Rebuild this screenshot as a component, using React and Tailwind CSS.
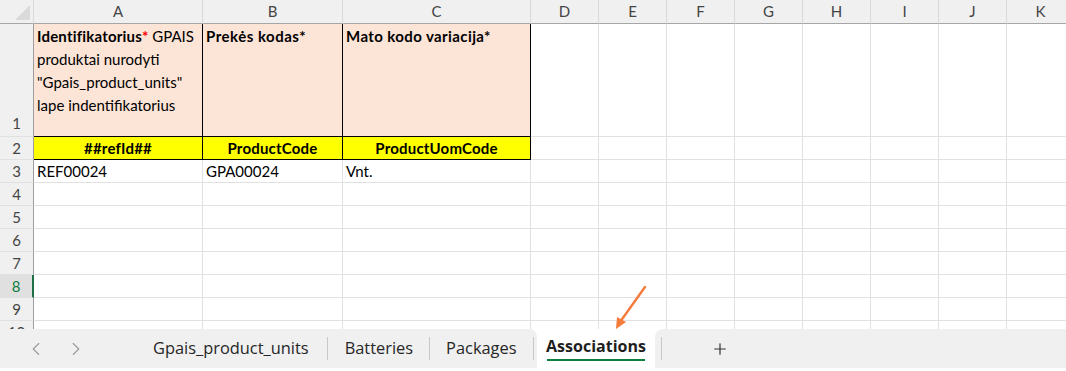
import { ChevronLeft, ChevronRight, Plus } from "lucide-react";

const cols = [
  { key: "A", w: "w-[169px]" },
  { key: "B", w: "w-[140px]" },
  { key: "C", w: "w-[188px]" },
  { key: "D", w: "w-[68px]" },
  { key: "E", w: "w-[68px]" },
  { key: "F", w: "w-[68px]" },
  { key: "G", w: "w-[68px]" },
  { key: "H", w: "w-[68px]" },
  { key: "I", w: "w-[68px]" },
  { key: "J", w: "w-[68px]" },
  { key: "K", w: "w-[68px]" },
];

const emptyCols = cols.slice(3);

function RowHead({ n, selected, tall }) {
  return (
    <div
      className={`w-[34px] shrink-0 flex justify-center border-r border-b border-b-[#e1e1e1] ${
        tall ? "items-end pb-[1px]" : "items-center"
      } ${
        selected
          ? "bg-[#e0e0e0] text-[#107c41] border-r-2 border-r-[#1e7145]"
          : "bg-[#f0f0f0] text-[#444] border-r-[#9e9e9e]"
      }`}
    >
      {n}
    </div>
  );
}

function Blank({ w }) {
  return <div className={`${w} shrink-0 border-r border-b border-[#e1e1e1]`} />;
}

export default function App() {
  const plainRows = [4, 5, 6, 7, 8, 9, 10];

  return (
    <div className="w-[1066px] h-[371px] bg-white overflow-hidden relative font-['Lato',sans-serif] text-[15px] text-black">
      <div className="h-[329px] overflow-hidden">
        {/* column letters */}
        <div className="flex h-[24px]">
          <div className="w-[34px] shrink-0 bg-[#f0f0f0] border-r border-r-[#d9d9d9] border-b border-b-[#a6a6a6] relative">
            <svg className="absolute right-[3px] bottom-[3px]" width="15" height="15">
              <polygon points="15,0 15,15 0,15" fill="#dadada" />
            </svg>
          </div>
          {cols.map((c) => (
            <div
              key={c.key}
              className={`${c.w} shrink-0 bg-[#f0f0f0] border-r border-r-[#d9d9d9] border-b border-b-[#a6a6a6] flex items-center justify-center text-[#444]`}
            >
              {c.key}
            </div>
          ))}
        </div>

        {/* row 1 */}
        <div className="flex h-[113px] leading-[23px]">
          <RowHead n={1} tall />
          <div className="w-[169px] shrink-0 bg-[#fce4d6] border-r border-b border-black pl-[3px] pt-[1px]">
            <span className="font-bold tracking-[0.2px]">Identifikatorius</span>
            <span className="font-bold text-[#ff0000]">*</span> GPAIS produktai nurodyti
            "Gpais_product_units" lape indentifikatorius
          </div>
          <div className="w-[140px] shrink-0 bg-[#fce4d6] border-r border-b border-black pl-[3px] pt-[1px] font-bold tracking-[0.5px]">
            Prekės kodas*
          </div>
          <div className="w-[188px] shrink-0 bg-[#fce4d6] border-r border-b border-black pl-[3px] pt-[1px] font-bold tracking-[0.4px]">
            Mato kodo variacija*
          </div>
          {emptyCols.map((c) => (
            <Blank key={c.key} w={c.w} />
          ))}
        </div>

        {/* row 2 */}
        <div className="flex h-[23px]">
          <RowHead n={2} />
          {["##refId##", "ProductCode", "ProductUomCode"].map((t, i) => (
            <div
              key={t}
              className={`${cols[i].w} shrink-0 bg-[#ffff00] border-r border-b border-black flex items-center justify-center font-bold tracking-[0.2px]`}
            >
              {t}
            </div>
          ))}
          {emptyCols.map((c) => (
            <Blank key={c.key} w={c.w} />
          ))}
        </div>

        {/* row 3 */}
        <div className="flex h-[23px]">
          <RowHead n={3} />
          {["REF00024", "GPA00024", "Vnt."].map((t, i) => (
            <div
              key={t}
              className={`${cols[i].w} shrink-0 border-r border-b border-[#e1e1e1] flex items-center pl-[3px]`}
            >
              {t}
            </div>
          ))}
          {emptyCols.map((c) => (
            <Blank key={c.key} w={c.w} />
          ))}
        </div>

        {plainRows.map((n) => (
          <div key={n} className="flex h-[23px]">
            <RowHead n={n} selected={n === 8} />
            {cols.map((c) => (
              <Blank key={c.key} w={c.w} />
            ))}
          </div>
        ))}
      </div>

      {/* sheet tabs */}
      <div className="flex h-[39px] bg-white font-['Open_Sans',sans-serif] text-[16.4px] text-[#262626]">
        <div className="w-[537px] shrink-0 bg-[#f0f0f0] rounded-tr-lg flex items-center">
          <ChevronLeft className="ml-[25px] text-[#999]" size={22} strokeWidth={1.2} />
          <ChevronRight className="ml-[18px] text-[#999]" size={22} strokeWidth={1.2} />
          <span className="ml-[66px]">Gpais_product_units</span>
          <span className="ml-[18px] w-px h-[23px] bg-[#c8c8c8]" />
          <span className="ml-[17px]">Batteries</span>
          <span className="ml-[16px] w-px h-[23px] bg-[#c8c8c8]" />
          <span className="ml-[16px]">Packages</span>
          <span className="ml-[16px] w-px h-[23px] bg-[#c8c8c8]" />
        </div>
        <div className="w-[118px] shrink-0 h-[37px] bg-white rounded-b-lg flex flex-col items-center justify-center">
          <span className="font-bold text-[16px] text-[#1f1f1f] leading-[20px] pt-[2px]">Associations</span>
          <span className="mt-[3px] w-[98px] h-[2px] bg-[#107c41]" />
        </div>
        <div className="flex-1 bg-[#f0f0f0] rounded-tl-lg flex items-center">
          <span className="ml-[6px] w-px h-[23px] bg-[#c8c8c8]" />
          <Plus className="ml-[49px] text-[#333]" size={18} strokeWidth={1.6} />
        </div>
      </div>

      {/* annotation arrow */}
      <svg className="absolute left-[608px] top-[282px]" width="44" height="52" viewBox="0 0 44 52">
        <line x1="37" y1="5" x2="12" y2="40" stroke="#f47b3b" strokeWidth="2.4" strokeLinecap="round" />
        <polygon points="8,47 9,35 18,40" fill="#f47b3b" />
      </svg>
    </div>
  );
}
